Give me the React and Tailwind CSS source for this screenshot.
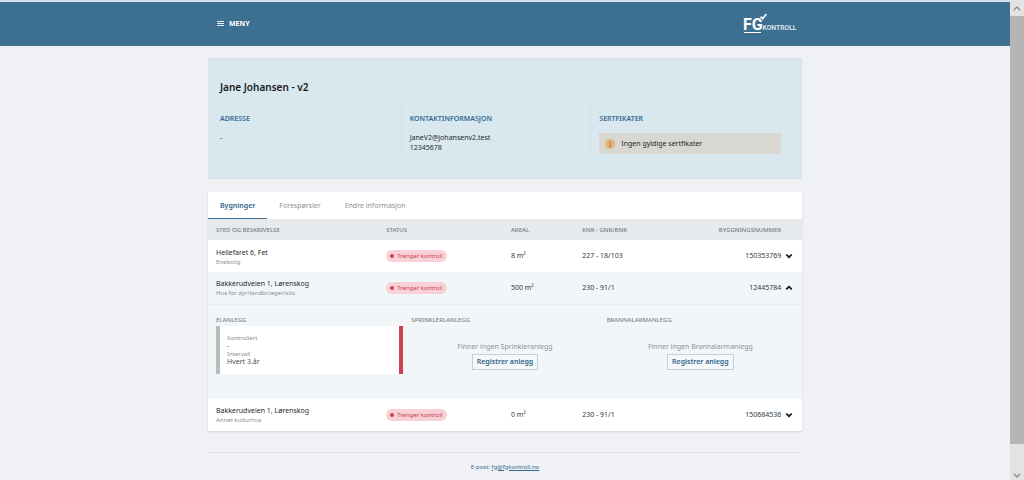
import { Fragment, useState } from "react";

const buildings = [
  { id: "150353769", name: "Hellefaret 6, Fet", type: "Enebolig", area: "8 m²", knr: "227 - 18/103" },
  { id: "12445784", name: "Bakkerudveien 1, Lørenskog", type: "Hus for dyr/landbr.lager/silo", area: "500 m²", knr: "230 - 91/1" },
  { id: "150684536", name: "Bakkerudveien 1, Lørenskog", type: "Annet kulturhus", area: "0 m²", knr: "230 - 91/1" },
];

const tabs = ["Bygninger", "Forespørsler", "Endre informasjon"];

function Chevron({ up }) {
  return (
    <svg viewBox="0 0 8 6" className="block h-[6px] w-[8px]" fill="none" stroke="#111" strokeWidth="1.7" aria-hidden="true">
      <path d={up ? "M1.2 4.4 4 1.7l2.8 2.7" : "M1.2 1.5 4 4.2l2.8-2.7"} />
    </svg>
  );
}

function Logo() {
  return (
    <a href="#hjem" aria-label="FG Kontroll" className="flex text-white">
      <svg viewBox="0 0 56 22" className="h-[22px] w-[56px]" aria-hidden="true">
        <text x="1" y="16.5" fontFamily="Roboto, sans-serif" fontWeight="700" fontSize="16" fill="#fff">FG</text>
        <text x="20.5" y="16.5" fontFamily="Roboto, sans-serif" fontWeight="500" fontSize="6.8" fill="#e6eff4">KONTROLL</text>
        <path d="M2 19.5h17" stroke="#fff" strokeWidth="1" />
        <path d="M18.6 3.6l2 2.1 3.8-4.6" fill="none" stroke="#fff" strokeWidth="1.6" />
      </svg>
    </a>
  );
}

function StatusBadge() {
  return (
    <span className="inline-flex h-3 items-center gap-[3px] rounded-full bg-[#f9d0d5] px-1 text-[6px] text-[#c43f50]">
      <span className="size-1 rounded-full bg-[#cf3f50]" />
      Trenger kontroll
    </span>
  );
}

function MissingSystem({ title, name }) {
  return (
    <section>
      <h3 className="mb-px text-[6px] leading-[10px] font-medium text-[#7c8388]">{title}</h3>
      <div className="flex h-14 flex-col items-center border border-[#eff3f5] pt-[13px]">
        <p className="mb-px leading-[13px] text-[#8b9297]">Finner ingen {name}</p>
        <button className="h-4 border border-[#c6cfd4] bg-[#f4f8fb] px-1 leading-[12px] font-semibold text-[#2f6489]">Registrer anlegg</button>
      </div>
    </section>
  );
}

function Systems() {
  return (
    <div className="grid h-[94px] grid-cols-3 gap-x-2 px-2 pt-[10px]">
      <section>
        <h3 className="mb-px text-[6px] leading-[10px] font-medium text-[#7c8388]">ELANLEGG</h3>
        <dl className="h-12 border-r-4 border-l-4 border-r-[#cf4250] border-l-[#b8bcbd] bg-white px-[7px] pt-2 text-[#4b4f52] leading-[8px]">
          <dt className="text-[6px] text-[#878d91]">Kontrollert</dt>
          <dd>-</dd>
          <dt className="text-[6px] text-[#878d91]">Intervall</dt>
          <dd>Hvert 3.år</dd>
        </dl>
      </section>
      <MissingSystem title="SPRINKLERLANLEGG" name="Sprinkleranlegg" />
      <MissingSystem title="BRANNALARMANLEGG" name="Brannalarmanlegg" />
    </div>
  );
}

function BuildingTable() {
  const [open, setOpen] = useState("12445784");
  return (
    <table className="w-full table-fixed border-collapse text-left text-[#33383b]">
      <colgroup>
        <col className="w-[30%]" />
        <col className="w-[21%]" />
        <col className="w-[12%]" />
        <col className="w-[16%]" />
        <col className="w-[17.5%]" />
        <col className="w-[3.5%]" />
      </colgroup>
      <thead className="bg-[#e6eaed] text-[6px] text-[#757c81]">
        <tr className="h-[21px]">
          <th className="pl-2 font-medium">STED OG BESKRIVELSE</th>
          <th className="font-medium">STATUS</th>
          <th className="font-medium">AREAL</th>
          <th className="font-medium">KNR - GNR/BNR</th>
          <th className="text-right font-medium">BYGGNINGSNUMMER</th>
          <td />
        </tr>
      </thead>
      <tbody>
        {buildings.map((b) => (
          <Fragment key={b.id}>
            <tr className={open === b.id ? "h-8 border-b border-[#e9eef1] bg-[#f2f6f9]" : "h-8"}>
              <td className="pl-2">
                <div className="leading-[11px] text-[#26292c]">{b.name}</div>
                <div className="text-[6px] leading-[8px] text-[#878d91]">{b.type}</div>
              </td>
              <td><StatusBadge /></td>
              <td>{b.area}</td>
              <td>{b.knr}</td>
              <td className="text-right">{b.id}</td>
              <td className="pl-1">
                <button className="block" aria-label={"Vis " + b.id} aria-expanded={open === b.id} onClick={() => setOpen(open === b.id ? "" : b.id)}>
                  <Chevron up={open === b.id} />
                </button>
              </td>
            </tr>
            {open === b.id && (
              <tr className="bg-[#f2f6f9]">
                <td colSpan={6} className="p-0"><Systems /></td>
              </tr>
            )}
          </Fragment>
        ))}
      </tbody>
    </table>
  );
}

function Scrollbar() {
  return (
    <div aria-hidden="true" className="sticky top-0 flex h-screen w-[14px] shrink-0 flex-col bg-[#e3e3e3]">
      <div className="flex h-4 items-center justify-center">
        <svg viewBox="0 0 8 5" className="h-[5px] w-2" fill="none" stroke="#8a8a8a" strokeWidth="1.3"><path d="M.8 4.2 4 1l3.2 3.2" /></svg>
      </div>
      <div className="flex-1 bg-[#b5b5b5]" />
      <div className="flex h-9 items-end justify-center pb-[2px]">
        <svg viewBox="0 0 8 5" className="h-[5px] w-2" fill="none" stroke="#8a8a8a" strokeWidth="1.3"><path d="M.8.8 4 4 7.2.8" /></svg>
      </div>
    </div>
  );
}

export default function App() {
  const [active, setActive] = useState("Bygninger");
  return (
    <div className="flex min-h-screen items-start bg-[#eff1f5] font-['Noto_Sans',sans-serif] text-[7px] leading-[10px]">
      <div className="min-w-0 flex-1">
        <header className="border-t-2 border-[#d5e0e7] bg-[#3d6f90]">
          <div className="mx-auto flex h-11 max-w-[594px] items-center justify-between px-1">
            <button className="flex items-center gap-[5px] px-[5px] font-bold text-white">
              <svg viewBox="0 0 7 6" className="h-[6px] w-[7px]" fill="#e3edf2" aria-hidden="true"><path d="M0 0h7v1H0zM0 2h7v1H0zM0 4h7v1H0z" /></svg>
              MENY
            </button>
            <Logo />
          </div>
        </header>

        <main className="mx-auto max-w-[594px]">
          <section className="mt-3 h-[121px] border border-[#d5e3eb] bg-[#d9e7ef] pt-[20px] pr-5 pl-[11px]">
            <h1 className="text-[10px] leading-[16px] font-semibold text-[#15191c]">Jane Johansen - v2</h1>
            <div className="mt-[10px] grid grid-cols-3 gap-x-2 text-[#24292c]">
              <div className="h-12 border-r border-[#d0dfe7] pt-[9px]">
                <h2 className="mb-[9px] font-semibold text-[#336a92]">ADRESSE</h2>
                <p>-</p>
              </div>
              <div className="h-12 border-r border-[#d0dfe7] pt-[9px]">
                <h2 className="mb-[9px] font-semibold text-[#336a92]">KONTAKTINFORMASJON</h2>
                <p>JaneV2@johansenv2.test</p>
                <p>12345678</p>
              </div>
              <div className="pt-[9px]">
                <h2 className="mb-[9px] font-semibold text-[#336a92]">SERTFIKATER</h2>
                <p className="flex h-[21px] items-center gap-[6px] bg-[#d8d7d2] px-[6px]">
                  <svg viewBox="0 0 10 10" className="size-[10px]" aria-hidden="true">
                    <circle cx="5" cy="5" r="5" fill="#e3b47e" />
                    <path d="M5 2v1.2M4.2 4.4H5v3M4 7.5h2" stroke="#a8743c" fill="none" />
                  </svg>
                  Ingen gyldige sertfikater
                </p>
              </div>
            </div>
          </section>

          <section className="mt-[13px] bg-white shadow-[0_1px_2px_rgba(0,0,0,0.12)]">
            <nav className="flex h-[27px]" role="tablist">
              {tabs.map((t) => (
                <button
                  key={t}
                  role="tab"
                  aria-selected={active === t}
                  onClick={() => setActive(t)}
                  className={active === t ? "border-b border-[#3d6f90] px-3 pt-[2px] font-semibold text-[#2f6489]" : "border-b border-transparent px-3 pt-[2px] text-[#8b9297]"}
                >
                  {t}
                </button>
              ))}
            </nav>
            <BuildingTable />
          </section>

          <footer className="mt-[21px] border-t border-[#e2e5e8] py-[9px] text-center text-[6px] text-[#336a92]">
            E-post: <a href="mailto:fg@fgkontroll.no" className="underline">fg@fgkontroll.no</a>
          </footer>
        </main>
      </div>
      <Scrollbar />
    </div>
  );
}
